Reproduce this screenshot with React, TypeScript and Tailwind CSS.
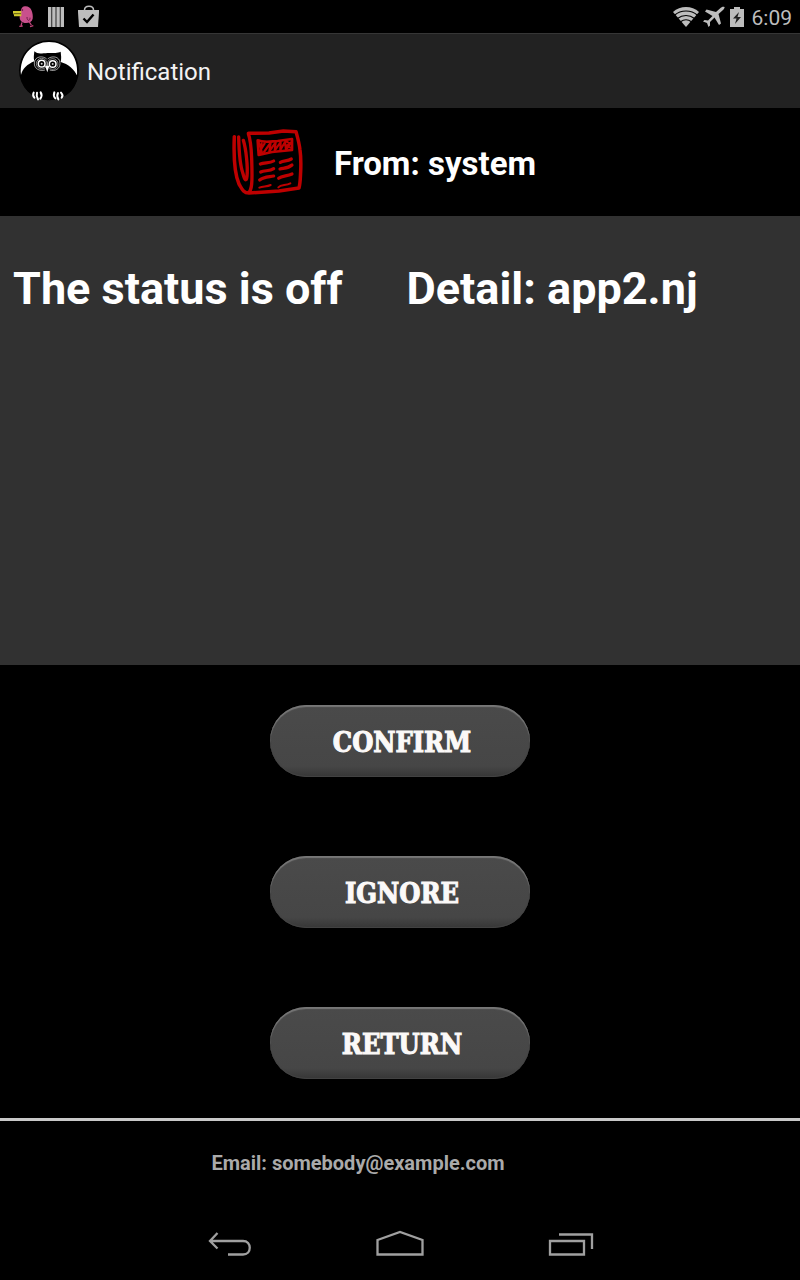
import type { ReactNode } from "react";

function StatusBar() {
  return (
    <header className="flex h-[33px] items-center justify-between bg-black pl-3 pr-2 text-[#bdbdbd]">
      <div className="flex items-center gap-3">
        <svg width="22" height="30" viewBox="12 5 66 90" aria-hidden="true">
          <path d="M42 66l-3 10M34 78l10-1M64 65l6 9M66 79l10-3" stroke="#c4457c" strokeWidth="4" fill="none" />
          <path d="M50 18c10-1 18 4 21 13 3 8 4 16 3 24-2 9-10 13-20 13-12 0-20-8-19-19 1-5 3-7 3-13 0-10 4-17 12-18z" fill="#c9508c" />
          <path d="M15 32h25v16H18v-6h-3z" fill="#cfc92f" />
          <path d="M16 40h23" stroke="#5f5a12" strokeWidth="3" />
          <circle cx="43" cy="29" r="2.500" fill="#501330" />
          <path d="M57 50c0 14 10 12 9 2" stroke="#6d1d47" strokeWidth="3" fill="none" />
        </svg>
        <svg width="20" height="24" viewBox="0 0 20 24" aria-hidden="true">
          <path d="M2 2h3.400v20H2zM6.200 2h3.400v20H6.200zM10.400 2h3.400v20h-3.400zM14.600 2H18v20h-3.400z" fill="#bdbdbd" />
        </svg>
        <svg width="22" height="24" viewBox="0 0 22 24" aria-hidden="true">
          <path d="M6.500 6V5c0-5 9-5 9 0v1" fill="none" stroke="#bdbdbd" strokeWidth="1.500" />
          <path d="M0 5h21v2l-1 15H1L0 7z" fill="#bdbdbd" />
          <path d="M5.500 13.500l3.500 3.500 6.500-7.500" fill="none" stroke="#000" strokeWidth="2.400" />
        </svg>
      </div>
      <div className="flex items-center">
        <svg width="26" height="22" viewBox="0 0 26 22" aria-hidden="true">
          <path d="M0 6C7-0.800 19-0.800 26 6L13 21z" fill="#bdbdbd" />
          <path d="M1.500 9.200C8 3.600 18 3.600 24.500 9.200M4.500 12.500c5-4 12-4 17 0M7.500 15.800c3.500-2.600 7.500-2.600 11 0" fill="none" stroke="#000" strokeWidth="1.200" />
        </svg>
        <svg className="ml-1" width="23" height="22" viewBox="0 0 23 22" aria-hidden="true">
          <path d="M21.500 1c-1.500-.8-3 0-4 1l-4.500 4L3.500 3.500 2 5.500l7.500 4.500-4.500 4.500-3.500-.5L0 15.500l4 1.500 1.500 4 1.500-1.500v-3.500l4.500-4.500 4.500 7.500 2-1.500-2.500-9.500 4.500-4c1-1 2-2.500 1.500-3z" fill="#bdbdbd" />
        </svg>
        <svg className="ml-1" width="14" height="22" viewBox="0 0 14 22" aria-hidden="true">
          <path d="M4 1h6v2h4v18H0V3h4z" fill="#bdbdbd" />
          <path d="M9 6L3 12.500h3.500L5 18l6-7H7.500z" fill="#222" />
        </svg>
        <span className="ml-2 pt-[2px] text-[21px] leading-6">6:09</span>
      </div>
    </header>
  );
}

function OwlLogo() {
  return (
    <svg width="64" height="64" viewBox="0 0 192 192" aria-hidden="true">
      <circle cx="93" cy="94" r="90" fill="#000" />
      <path d="M9 108C3 50 43 9 93 9s90 40 84 100L150 84H40z" fill="#fff" />
      <path d="M49 37c10 9 20 6 40 5 20-1 30 1 39-4 1 12 3 18 0 31 22 6 42 22 49 42-2 46-38 71-84 71S12 152 9 109c4-20 20-34 40-42-3-11-1-18 0-30z" fill="#000" />
      <g fill="none" stroke="#fff">
        <circle cx="71" cy="74" r="10" strokeWidth="4.500" />
        <circle cx="104" cy="75" r="10" strokeWidth="4.500" />
        <circle cx="71" cy="74" r="16" strokeWidth="1.500" />
        <circle cx="104" cy="75" r="16" strokeWidth="1.500" />
        <path d="M86 60C76 50 50 50 49 72c-1 17 16 26 32 21M89 60c10-10 37-10 37 13 0 17-15 25-31 20" strokeWidth="1.800" />
      </g>
      <circle cx="71" cy="74" r="3" fill="#ccc" />
      <circle cx="104" cy="75" r="3" fill="#ccc" />
      <path d="M81 80h13l-6 20z" fill="#fff" />
      <g fill="none" stroke="#fff" strokeWidth="6" strokeLinecap="round">
        <path d="M47 161q-4 8 2 15M57 161q-3 10 3 20M68 160q6 9-1 19M109 160q-4 11 3 18M120 162q-5 9 1 19M129 161q8 8 2 15" />
      </g>
    </svg>
  );
}

function NewspaperIcon() {
  return (
    <svg width="80" height="72" viewBox="0 0 240 216" fill="none" stroke="#be0000" strokeLinecap="round" strokeLinejoin="round" aria-hidden="true">
      <path d="M62 22l61-1 43-6 38 2c5 18 10 35 12 55 3 20 3 40 2 65-1 16-1 35-5 49l-60 9-42 3-48 3c-18 0-22-14-30-27C18 140 17 80 19 32" strokeWidth="10.500" />
      <path d="M61 23c8 22 9 50 10 75 1 30 2 58 0 76-1 12-5 24-10 25M32 33c1 45 4 85 13 110 4 18 10 26 12 8 3-30-3-82-11-108" strokeWidth="10" />
      <path d="M89 43c20 8 40 3 60 2l43-6v33l-60 6-40 9z" strokeWidth="8" />
      <path d="M92 48l10 32M94 78l16-26M101 52l-5 30M108 78l20-28-4 26 19-27-3 25 18-26-1 24 14-24 3 24 14-22-8 14M176 47l12 7-14 5 15 6" strokeWidth="6.500" />
      <path d="M97 114c12-5 28-2 40-9M98 138c12-6 26-1 39-10M95 162c12-10 26-9 42-12M157 109c10-6 20-3 33-10M156 129c10-3 24-1 36-12M152 157c10-8 25-6 40-13" strokeWidth="9.500" />
      <path d="M94 185c12-5 22-2 34-8M151 184c8-8 22-5 36-12" strokeWidth="6" />
    </svg>
  );
}

function ActionButton({ children }: { children: ReactNode }) {
  return (
    <button
      type="button"
      className="h-[72px] w-[260px] rounded-[36px] bg-linear-to-b from-[#4a4a4a] from-0% via-[#464646] via-85% to-[#363636] pt-1 pl-1 font-['DejaVu_Serif_Condensed','DejaVu_Serif',serif] text-[27px] leading-8 font-bold text-[#fbf9f8] shadow-[inset_0_2px_1px_#777,inset_0_-1px_1px_#444] [-webkit-text-stroke:1px_#fbf9f8]"
    >
      {children}
    </button>
  );
}

function NavigationBar() {
  return (
    <nav className="flex h-[72px] items-center justify-center gap-[124px] bg-black pl-[2px] text-[#a0a0a0]">
      <button type="button" aria-label="Back">
        <svg width="44" height="28" viewBox="0 0 44 28" fill="none" stroke="currentColor" strokeWidth="2.300">
          <path d="M9.500 3L2 11l7.500 7.500M2 11h33c9 0 9 13.500 0 13.500H20" />
        </svg>
      </button>
      <button type="button" aria-label="Home">
        <svg width="48" height="28" viewBox="0 0 48 28" fill="none" stroke="currentColor" strokeWidth="2.300">
          <path d="M1.500 10L24 2l22.500 8v14.500h-45z" />
        </svg>
      </button>
      <button type="button" aria-label="Recent apps">
        <svg width="46" height="28" viewBox="0 0 46 28" fill="none" stroke="currentColor" strokeWidth="2.300">
          <path d="M2 11h34v13.500H2zM11 4.500h33V19" />
        </svg>
      </button>
    </nav>
  );
}

export default function App() {
  return (
    <div className="flex min-h-screen flex-col bg-black font-['Roboto',sans-serif] text-white">
      <StatusBar />
      <div className="flex h-[75px] items-center gap-[5px] border-t border-[#363636] bg-[#222] pl-[18px]">
        <OwlLogo />
        <h1 className="pt-[2px] text-[24px] leading-8 text-[#f3f3f3]">Notification</h1>
      </div>
      <main className="flex flex-1 flex-col">
        <div className="flex h-[108px] items-center justify-center gap-[26px] pr-9">
          <NewspaperIcon />
          <h2 className="pt-1 text-[33px] leading-10 font-bold">From: system</h2>
        </div>
        <section className="flex flex-1 flex-wrap content-start gap-x-[64px] bg-[#313131] px-[13px] pt-[45px] text-[45px] leading-14 font-bold">
          <p>The status is off</p>
          <p>Detail: app2.nj</p>
        </section>
        <div className="flex flex-col items-center gap-[79px] pt-10 pb-[39px]">
          <ActionButton>CONFIRM</ActionButton>
          <ActionButton>IGNORE</ActionButton>
          <ActionButton>RETURN</ActionButton>
        </div>
      </main>
      <footer className="flex h-[90px] justify-center border-t-[3px] border-[#c8c8c8] pt-[30px] pr-[84px] text-[20px] leading-6 font-bold text-[#aaa]">
        <p>Email: somebody@example.com</p>
      </footer>
      <NavigationBar />
    </div>
  );
}
